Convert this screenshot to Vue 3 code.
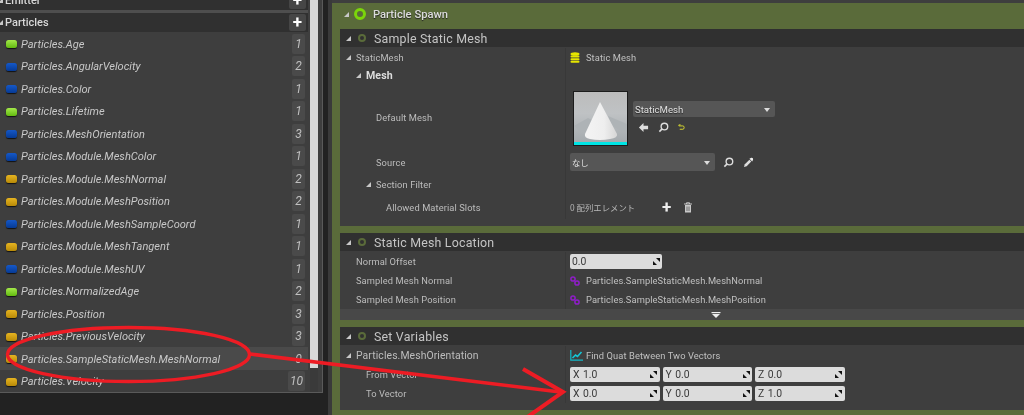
<script setup>
const rows = [
  ['Particles.Age', 'g', 1], ['Particles.AngularVelocity', 'b', 2], ['Particles.Color', 'b', 1],
  ['Particles.Lifetime', 'g', 1], ['Particles.MeshOrientation', 'b', 3], ['Particles.Module.MeshColor', 'b', 1],
  ['Particles.Module.MeshNormal', 'y', 2], ['Particles.Module.MeshPosition', 'y', 2],
  ['Particles.Module.MeshSampleCoord', 'b', 1], ['Particles.Module.MeshTangent', 'y', 1],
  ['Particles.Module.MeshUV', 'b', 1], ['Particles.NormalizedAge', 'g', 2], ['Particles.Position', 'y', 3],
  ['Particles.PreviousVelocity', 'y', 3], ['Particles.SampleStaticMesh.MeshNormal', 'y', 0], ['Particles.Velocity', 'y', 10],
]
const vectors = [
  { label: 'From Vector', v: ['1.0', '0.0', '0.0'] },
  { label: 'To Vector', v: ['0.0', '0.0', '1.0'] },
]
const axes = ['X', 'Y', 'Z']
</script>

<template>
  <div class="root">
    <aside class="left">
      <div class="list">
        <div class="lhead emitter"><span class="tri small"></span><b>Emitter</b><span class="plus">+</span></div>
        <div class="lsep"></div>
        <div class="lhead"><span class="tri small"></span><b>Particles</b><span class="plus">+</span></div>
        <div v-for="(r, i) in rows" :key="r[0]" class="lrow" :class="{ hl: i === 14 }">
          <span class="pin" :class="r[1]"></span>
          <span class="pname">{{ r[0] }}</span>
          <span class="count">{{ r[2] }}</span>
        </div>
      </div>
      <div class="scroll"><div class="thumb"></div></div>
    </aside>

    <main class="right">
      <div class="topstrip"></div>
      <div class="green">
        <div class="spawn"><span class="tri"></span><span class="ring big"></span><b>Particle Spawn</b></div>

        <section class="mod">
          <div class="mhead"><span class="tri"></span><span class="ring"></span>Sample Static Mesh</div>
          <div class="mbody first">
            <div class="row h18">
              <div class="lab l0"><span class="tri"></span>StaticMesh</div>
              <div class="val"><svg class="db" viewBox="0 0 10 11"><g fill="#e6e600"><ellipse cx="5" cy="2" rx="4.5" ry="1.8"/><rect x=".5" y="3.6" width="9" height="2" rx="1"/><rect x=".5" y="6.2" width="9" height="2" rx="1"/><rect x=".5" y="8.8" width="9" height="2" rx="1"/></g></svg><span class="vtext">Static Mesh</span></div>
            </div>
            <div class="row h18">
              <div class="lab l1 strong"><span class="tri"></span>Mesh</div>
              <div class="val"></div>
            </div>
            <div class="row h66">
              <div class="lab l2">Default Mesh</div>
              <div class="val thumbval">
                <div class="asset">
                  <svg viewBox="0 0 53 53" width="53" height="53">
                    <defs>
                      <linearGradient id="sky" x1="0" y1="0" x2="0" y2="1"><stop offset="0" stop-color="#bcbcbc"/><stop offset=".4" stop-color="#bfc2c4"/><stop offset="1" stop-color="#a2a8ac"/></linearGradient>
                      <linearGradient id="cone" x1="0" y1="0" x2="1" y2="0"><stop offset="0" stop-color="#f4f4f4"/><stop offset=".6" stop-color="#eeeeee"/><stop offset="1" stop-color="#d6d6d6"/></linearGradient>
                    </defs>
                    <rect width="53" height="53" fill="url(#sky)"/>
                    <path d="M0 34 L14 26 L30 34 L12 44 Z M34 24 L53 32 V42 L38 34 Z" fill="#aeb3b6"/>
                    <path d="M26 10 L43 42 Q44 46 36 47 Q26 49 16 47 Q10 46 11 42 Z" fill="url(#cone)"/>
                    <rect y="50" width="53" height="3" fill="#00e5e5"/>
                  </svg>
                </div>
                <div class="assetside">
                  <div class="combo wide"><span>StaticMesh</span><i class="caret"></i></div>
                  <div class="tools">
                    <svg viewBox="0 0 12 12" width="11" height="11"><path d="M6 1 L1 6 L6 11 V8 H11 V4 H6 Z" fill="#ddd"/></svg>
                    <svg viewBox="0 0 12 12" width="11" height="11"><circle cx="7" cy="5" r="3.6" fill="none" stroke="#ddd" stroke-width="1.5"/><path d="M4.5 7.5 L1.5 10.5" stroke="#ddd" stroke-width="1.8"/></svg>
                    <svg viewBox="0 0 8 8" width="7" height="7"><path d="M3 1 H1 V2.2 H5.5 Q7 2.2 7 4 Q7 6 5.5 6 H2" fill="none" stroke="#d8d830" stroke-width="1.1"/></svg>
                  </div>
                </div>
              </div>
            </div>
            <div class="row h22">
              <div class="lab l2">Source</div>
              <div class="val">
                <div class="combo src"><span class="cjk">なし</span><i class="caret"></i></div>
                <svg class="ic1" viewBox="0 0 12 12" width="11" height="11"><circle cx="7" cy="5" r="3.6" fill="none" stroke="#ddd" stroke-width="1.5"/><path d="M4.5 7.5 L1.5 10.5" stroke="#ddd" stroke-width="1.8"/></svg>
                <svg class="ic2" viewBox="0 0 12 12" width="11" height="11"><path d="M1 11 L2 8 L7 3 L9 5 L4 10 Z" fill="#ddd"/><path d="M7 2 L9 0.8 Q11.5 .5 11 3 L10 5 Z" fill="#eee"/></svg>
              </div>
            </div>
            <div class="row h22">
              <div class="lab l3"><span class="tri"></span>Section Filter</div>
              <div class="val"></div>
            </div>
            <div class="row h22">
              <div class="lab l4">Allowed Material Slots</div>
              <div class="val">
                <span class="cjk arr">0 配列エレメント</span>
                <span class="aplus">+</span>
                <svg viewBox="0 0 10 11" width="10" height="11"><path d="M1 2 H9 M3.5 2 V.8 H6.5 V2" fill="none" stroke="#c8c8c8"/><path d="M2 3 H8 V10.5 H2 Z" fill="#c8c8c8"/><path d="M4 4.5 V9 M6 4.5 V9" stroke="#555" stroke-width=".8"/></svg>
              </div>
            </div>
          </div>
        </section>

        <section class="mod">
          <div class="mhead"><span class="tri"></span><span class="ring"></span>Static Mesh Location</div>
          <div class="mbody">
            <div class="row h19">
              <div class="lab l0b">Normal Offset</div>
              <div class="val"><div class="num single"><span>0.0</span><svg class="grip" viewBox="0 0 7 7"><path d="M3 0 H7 V4 Z M0 3 V7 H4 Z"/></svg></div></div>
            </div>
            <div class="row h19">
              <div class="lab l0b">Sampled Mesh Normal</div>
              <div class="val"><svg class="link" viewBox="0 0 10 10"><circle cx="3" cy="3" r="2.1" /><circle cx="7" cy="7" r="2.1" /></svg><span class="vtext">Particles.SampleStaticMesh.MeshNormal</span></div>
            </div>
            <div class="row h19">
              <div class="lab l0b">Sampled Mesh Position</div>
              <div class="val"><svg class="link" viewBox="0 0 10 10"><circle cx="3" cy="3" r="2.1" /><circle cx="7" cy="7" r="2.1" /></svg><span class="vtext">Particles.SampleStaticMesh.MeshPosition</span></div>
            </div>
          </div>
          <div class="expand"><svg viewBox="0 0 10 6" width="10" height="6"><rect width="9" height="1.2" x=".5" fill="#eee"/><path d="M1 2 H9 L5 6 Z" fill="#eee"/></svg></div>
        </section>

        <section class="mod">
          <div class="mhead"><span class="tri"></span><span class="ring"></span>Set Variables</div>
          <div class="mbody last">
            <div class="row h19">
              <div class="lab l0 wider"><span class="tri"></span>Particles.MeshOrientation</div>
              <div class="val"><svg class="graph" viewBox="0 0 13 11"><path d="M.8 0 V10.2 H13" fill="none" stroke="#13b8c8" stroke-width="1.2"/><path d="M2.5 8 L5.5 5 L7.5 6.5 L11.5 2" fill="none" stroke="#13c8d8" stroke-width="1.6"/></svg><span class="vtext">Find Quat Between Two Vectors</span></div>
            </div>
            <div v-for="vec in vectors" :key="vec.label" class="row h19">
              <div class="lab l1b">{{ vec.label }}</div>
              <div class="val vec">
                <div v-for="(n, i) in vec.v" :key="i" class="num"><em>{{ axes[i] }}</em><span>{{ n }}</span><svg class="grip" viewBox="0 0 7 7"><path d="M3 0 H7 V4 Z M0 3 V7 H4 Z"/></svg></div>
              </div>
            </div>
          </div>
        </section>
      </div>
    </main>

    <svg class="notes" viewBox="0 0 1024 415" width="1024" height="415">
      <g fill="none" stroke="#ed1c24">
        <ellipse cx="128.5" cy="354.5" rx="121" ry="27" stroke-width="3.4"/>
        <path d="M250 354 L560 392" stroke-width="3.6"/>
        <path d="M523 369 L563 392 L526 418" stroke-width="4"/>
      </g>
    </svg>
  </div>
</template>

<style scoped>
.root { position: relative; width: 1024px; height: 415px; overflow: hidden; display: flex; background: #222222; font-family: Roboto, "Noto Sans CJK JP", sans-serif; color: #c4c4c4; filter: blur(.3px); }
.left { width: 322px; height: 392px; display: flex; flex: none; background: #3e3e3e; border-right: 1px solid #5a5a5a; border-bottom: 1px solid #5a5a5a; box-sizing: content-box; overflow: hidden; }
.list { width: 308px; flex: none; }
.lhead { height: 19px; background: #303030; display: flex; align-items: center; font-size: 11px; color: #d8d8d8; position: relative; }
.lhead b { font-weight: 500; margin-left: 2px; }
.lhead .tri.small { margin-left: -2px; }
.emitter { margin-top: -9px; }
.lsep { height: 3px; background: #4e4e4e; }
.plus { position: absolute; left: 289px; top: 1px; width: 17px; height: 17px; background: #464646; border-radius: 2px; color: #fff; font-weight: 700; font-size: 17px; line-height: 16px; text-align: center; }
.lrow { height: 22.5px; display: flex; align-items: center; position: relative; padding-top: 1.5px; box-sizing: border-box; }
.lrow.hl { background: #4a4a4a; }
.pin { width: 11px; height: 8px; margin-left: 6px; border-radius: 2.5px; flex: none; box-shadow: 0 1px 1px #111; }
.pin.g { background: linear-gradient(#a4e84a, #62bb10); }
.pin.b { background: linear-gradient(#1558c8, #063a94); }
.pin.y { background: linear-gradient(#e6b420, #b88a08); }
.pname { margin-left: 4px; font-size: 11.05px; font-style: italic; color: #c8c8c8; white-space: nowrap; }
.count { position: absolute; right: 3px; top: 1.5px; min-width: 13px; padding: 0 2px; box-sizing: border-box; height: 20px; line-height: 20px; text-align: center; background: #4a4a4a; border-radius: 2px; font-size: 12px; font-style: italic; color: #c0c0c0; }
.scroll { width: 8px; margin-left: 2px; flex: none; background: #3a3a3a; }
.thumb { height: 368px; background: #d8d8d8; }

.right { margin-left: 5px; border-left: 4px solid #3a3a3a; flex: 1; display: flex; flex-direction: column; min-width: 0; }
.topstrip { height: 3px; background: #3e3e3e; flex: none; }
.green { flex: 1; background: #5a6b3a; padding-left: 8px; }
.spawn { height: 26px; padding-bottom: 4px; box-sizing: border-box; margin-left: -8px; display: flex; align-items: center; font-size: 11.2px; color: #dcdcdc; }
.spawn b { font-weight: 500; margin-left: 7px; text-shadow: 0 1px 1px #222; }
.spawn .tri { margin-left: 12px; }
.tri { display: inline-block; width: 0; height: 0; border-left: 5px solid transparent; border-bottom: 5px solid #c8c8c8; flex: none; }
.ring { width: 8px; height: 8px; border-radius: 50%; border: 2px solid #5a6b3a; box-sizing: border-box; margin: 0 8px 0 7px; flex: none; }
.ring.big { width: 12px; height: 12px; border: 3px solid #7bd60a; margin: 0 0 0 5px; }
.mod { margin-bottom: 7px; }
.mhead { height: 18px; background: #303030; display: flex; align-items: center; font-size: 12.4px; letter-spacing: .2px; color: #c4c4c4; padding-left: 6px; }
.mbody { background: #3e3e3e; padding-top: 1px; box-sizing: border-box; }
.mbody.first { height: 179px; }
.mbody.last { height: 65px; }
.row { display: flex; font-size: 9.3px; }
.h18 { height: 18px; }
.h19 { height: 19px; }
.h22 { height: 22.5px; }
.h66 { height: 67px; }
.lab { width: 226px; flex: none; display: flex; align-items: center; border-right: 1px solid #383838; box-sizing: border-box; white-space: nowrap; color: #bdbdbd; letter-spacing: .1px; }
.lab .tri { margin-right: 5px; }
.wider { font-size: 10.4px; }
.l0 { padding-left: 6px; }
.l0b { padding-left: 16px; }
.l1 { padding-left: 16px; }
.l1b { padding-left: 26px; }
.l2 { padding-left: 36px; }
.l3 { padding-left: 26px; }
.l4 { padding-left: 46px; }
.strong { font-size: 10.6px; font-weight: 700; color: #ddd; }
.val { flex: 1; display: flex; align-items: center; padding-left: 4px; position: relative; }
.vtext { margin-left: 6px; color: #c0c0c0; letter-spacing: .1px; white-space: nowrap; }
.db { width: 10px; height: 11px; }
.thumbval { align-items: flex-start; padding-top: 7px; padding-left: 7px; }
.asset { width: 53px; height: 53px; border: 1px solid #1c1c1c; flex: none; margin-right: 5px; }
.asset svg { display: block; }
.assetside { padding-top: 10px; }
.combo { background: #565656; border-radius: 2px; display: flex; align-items: center; justify-content: space-between; box-sizing: border-box; padding: 0 5px 0 2px; font-size: 9.6px; color: #e0e0e0; }
.combo.wide { width: 142px; height: 16px; text-shadow: 0 1px 1px #222; }
.combo.src { width: 145px; height: 18px; flex: none; }
.caret { width: 0; height: 0; border: 3.5px solid transparent; border-top: 4px solid #ddd; margin-top: 4px; }
.tools { display: flex; align-items: center; gap: 9px; margin: 3px 0 0 5px; height: 14px; }
.ic1 { margin-left: 8px; }
.ic2 { margin-left: 9px; }
.arr { color: #b8b8b8; width: 92px; flex: none; }
.aplus { color: #eee; font-size: 17px; font-weight: 700; width: 21px; line-height: 14px; }
.num { background: #dcdcdc; border-radius: 2px; height: 14.5px; display: flex; align-items: center; color: #3a3a3a; font-size: 10.4px; padding-left: 3px; box-sizing: border-box; position: relative; }
.num.single { width: 92px; padding-left: 2px; }
.num em { font-style: normal; margin-right: 3.5px; }
.grip { position: absolute; right: 2.5px; top: 4px; width: 7px; height: 7px; fill: #111; }
.vec { gap: 3px; }
.vec .num { width: 89.5px; }
.link { width: 10px; height: 10px; fill: none; stroke: #8f1ec8; stroke-width: 1.5; flex: none; }
.graph { width: 13px; height: 11px; flex: none; }
.val .graph + .vtext { margin-left: 3px; }
.expand { height: 11px; background: #484848; display: flex; padding-left: 371px; align-items: center; }
.cjk { font-family: "Noto Sans CJK JP", sans-serif; font-size: 8.4px; }
.notes { position: absolute; left: 0; top: 0; pointer-events: none; }
</style>
